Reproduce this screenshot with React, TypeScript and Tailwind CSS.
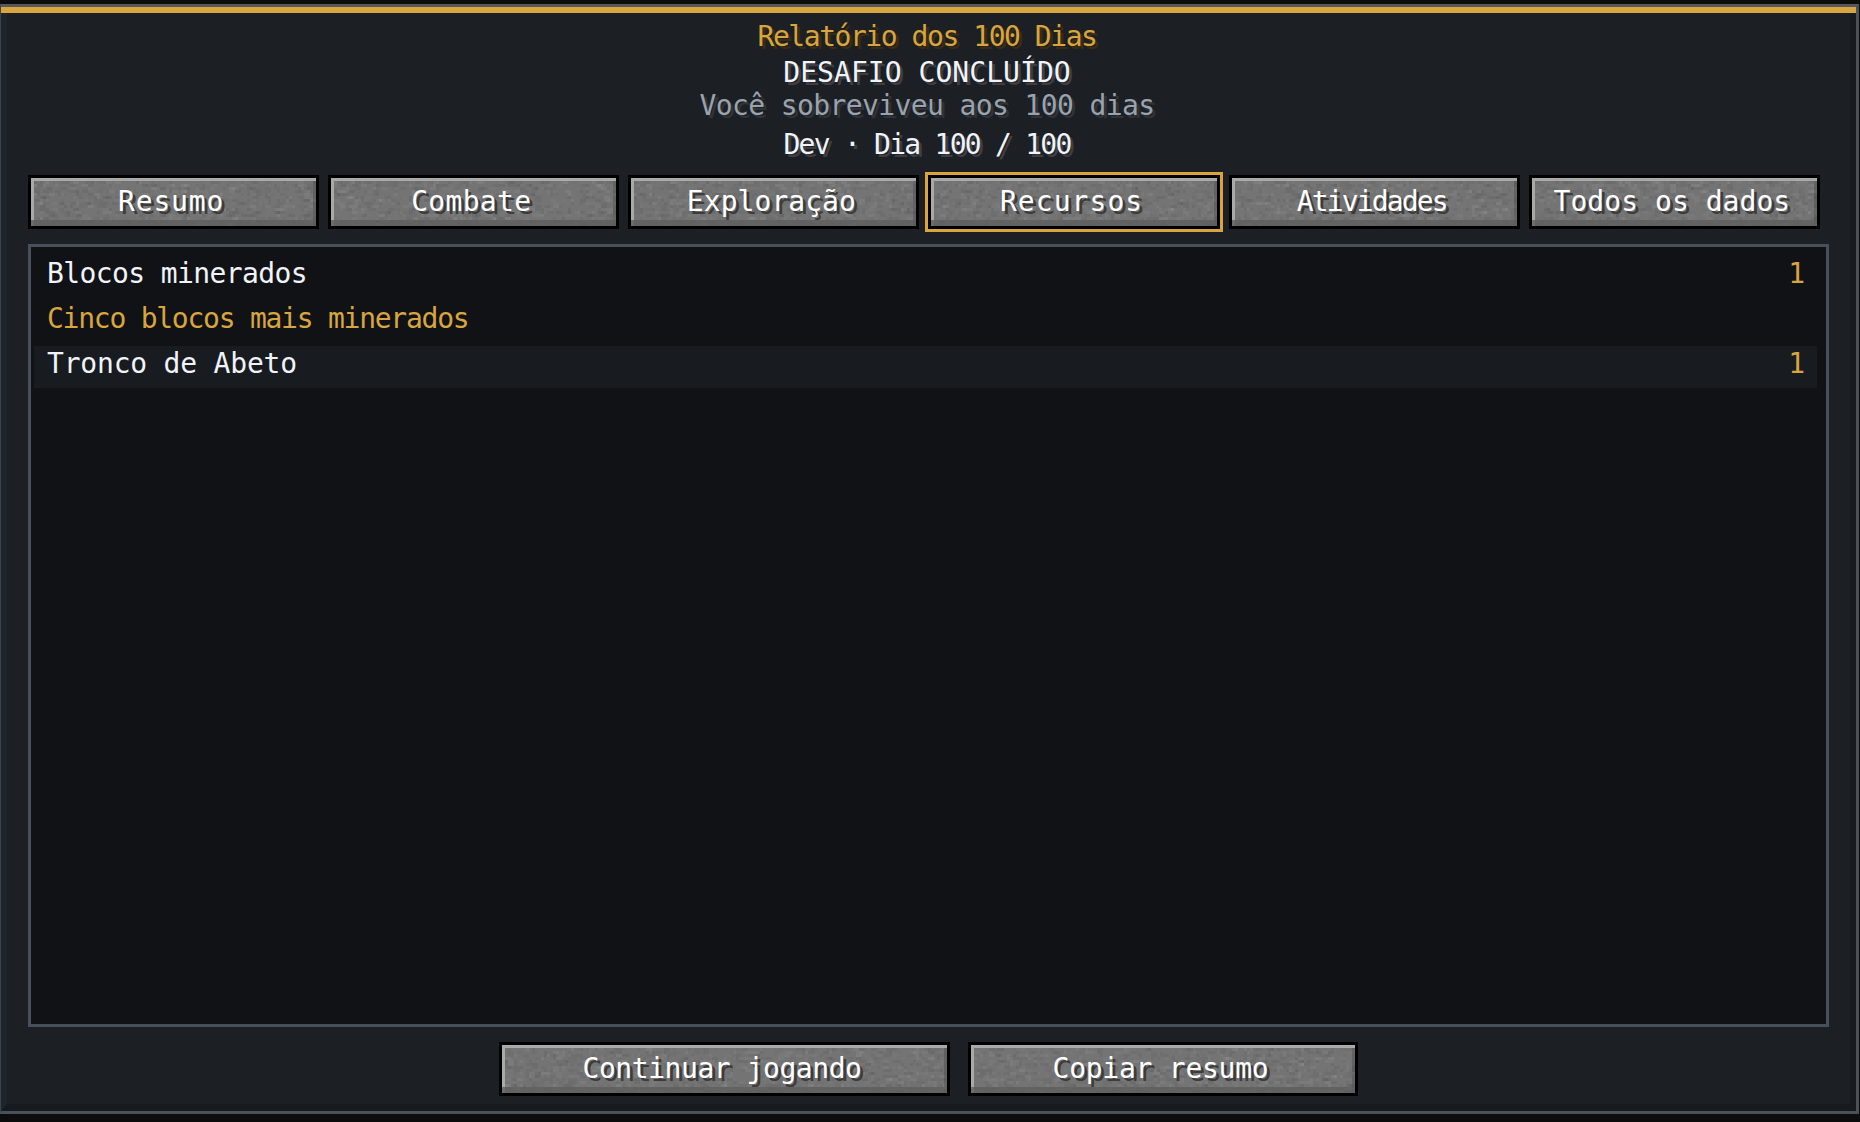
import { useMemo } from 'react';

const TABS = [
  { label: 'Resumo', tracking: 'tracking-[0.8px]' },
  { label: 'Combate', tracking: 'tracking-[0.3px]' },
  { label: 'Exploração', tracking: 'tracking-[0.05px]' },
  { label: 'Recursos', tracking: 'tracking-[1.05px]', selected: true },
  { label: 'Atividades', tracking: 'tracking-[-1.85px]' },
  { label: 'Todos os dados', tracking: 'tracking-[0.05px]' },
];

// Stone texture of the game buttons, 3px cells
function StoneNoise({ seed }: { seed: number }) {
  const cells = useMemo(() => {
    let s = seed * 7919 + 13;
    const next = () => {
      s = (s * 1103515245 + 12345) & 0x7fffffff;
      return s / 0x7fffffff;
    };
    const out: { x: number; y: number; w: number; o: number; dark: boolean }[] = [];
    for (let y = 0; y < 16; y++) {
      for (let x = 0; x < 150; x++) {
        const r = next();
        if (r < 0.4) out.push({ x: x * 3, y: y * 3, w: next() < 0.5 ? 6 : 3, o: 0.015 + next() * 0.05, dark: next() < 0.6 });
      }
    }
    return out;
  }, [seed]);

  return (
    <svg className="absolute inset-0 h-full w-full" shapeRendering="crispEdges" aria-hidden="true">
      {cells.map((c, i) => (
        <rect key={i} x={c.x} y={c.y} width={c.w} height={3} fill={c.dark ? '#000' : '#fff'} opacity={c.o} />
      ))}
    </svg>
  );
}

function GameButton({ label, tracking, seed, selected, className }: { label: string; tracking: string; seed: number; selected?: boolean; className?: string }) {
  return (
    <button className={`h-[54px] border-[3px] border-black ${selected ? 'outline-[3px] outline-[#d8a53e]' : ''} ${className || ''}`}>
      <div className="relative flex h-full w-full items-center justify-center overflow-hidden bg-[#747474] pr-[5px]">
        <StoneNoise seed={seed} />
        <span className="absolute inset-x-0 top-0 h-[3px] bg-[#a9a9a9]" />
        <span className="absolute bottom-0 left-0 top-0 w-[3px] bg-[#a9a9a9]" />
        <span className="absolute bottom-0 right-0 top-[3px] w-[3px] bg-black/15" />
        <span className="absolute inset-x-0 bottom-0 h-[6px] bg-[#5e5e5e]/80" />
        <span className={`relative -mt-[1px] text-[28px] leading-none text-white [text-shadow:3px_3px_0_#3c3c3c] ${tracking}`}>{label}</span>
      </div>
    </button>
  );
}

export default function App() {
  return (
    <div className="h-[1122px] w-full bg-[#0c0c0d] pt-[4px] font-['DejaVu_Sans_Mono',monospace]">
      <div className="flex h-[1110px] w-[1859px] flex-col border-b-[3px] border-l border-r-[3px] border-t-[3px] border-b-[#4a5058] border-l-[#3c434b] border-r-[#4a5058] border-t-[#55585d] bg-[#1c1f24]">
        <div className="h-[6px] bg-[#d8a53e]" />
        <div className="flex flex-1 flex-col border-b-[7px] border-l-[6px] border-r-[6px] border-b-[#16191d] border-l-[#1f252c] border-r-[#171a1f] pl-[21px] pr-[21px]">
          {/* Header */}
          <div className="flex h-[162px] flex-col items-center pr-[3px] text-[28px] leading-none">
            <h1 className="mt-[10px] h-[36px] tracking-[-1.45px] text-[#d8a53e] [text-shadow:3px_3px_0_#3a2c12]">Relatório dos 100 Dias</h1>
            <p className="h-[33px] tracking-[0.05px] text-[#f0f3f8] [text-shadow:3px_3px_0_#3c3e42]">DESAFIO CONCLUÍDO</p>
            <p className="h-[39px] tracking-[-0.6px] text-[#9aa3ad] [text-shadow:3px_3px_0_#2f3237]">Você sobreviveu aos 100 dias</p>
            <p className="tracking-[-1.75px] text-[#f0f3f8] [text-shadow:3px_3px_0_#3c3e42]">Dev · Dia 100 / 100</p>
          </div>

          {/* Tabs */}
          <div className="mr-[9px] grid grid-cols-6 gap-[9px]">
            {TABS.map((tab, i) => (
              <GameButton key={tab.label} label={tab.label} tracking={tab.tracking} selected={tab.selected} seed={i + 1} />
            ))}
          </div>

          {/* Stats list */}
          <div className="mt-[15px] h-[783px] border-[3px] border-[#47505a] bg-[#101216] pb-[9px] pl-[3px] pr-[9px] pt-[9px] text-[28px] leading-none">
            <div className="flex flex-col gap-[3px]">
              <div className="flex h-[42px] items-start justify-between pl-[13px] pr-[12px] pt-[4px]">
                <span className="tracking-[-0.6px] text-[#f0f3f8]">Blocos minerados</span>
                <span className="text-[#d8a53e]">1</span>
              </div>
              <div className="flex h-[42px] items-start pl-[13px] pr-[12px] pt-[4px]">
                <span className="tracking-[-1.25px] text-[#d8a53e]">Cinco blocos mais minerados</span>
              </div>
              <div className="flex h-[42px] items-start justify-between bg-[#181b20] pl-[13px] pr-[12px] pt-[4px]">
                <span className="tracking-[-0.2px] text-[#f0f3f8]">Tronco de Abeto</span>
                <span className="text-[#d8a53e]">1</span>
              </div>
            </div>
          </div>

          {/* Footer buttons */}
          <div className="mt-[15px] flex justify-center gap-[18px]">
            <GameButton label="Continuar jogando" tracking="tracking-[-0.45px]" seed={11} className="w-[451px]" />
            <GameButton label="Copiar resumo" tracking="tracking-[-0.25px]" seed={12} className="w-[390px]" />
          </div>
        </div>
      </div>
    </div>
  );
}
